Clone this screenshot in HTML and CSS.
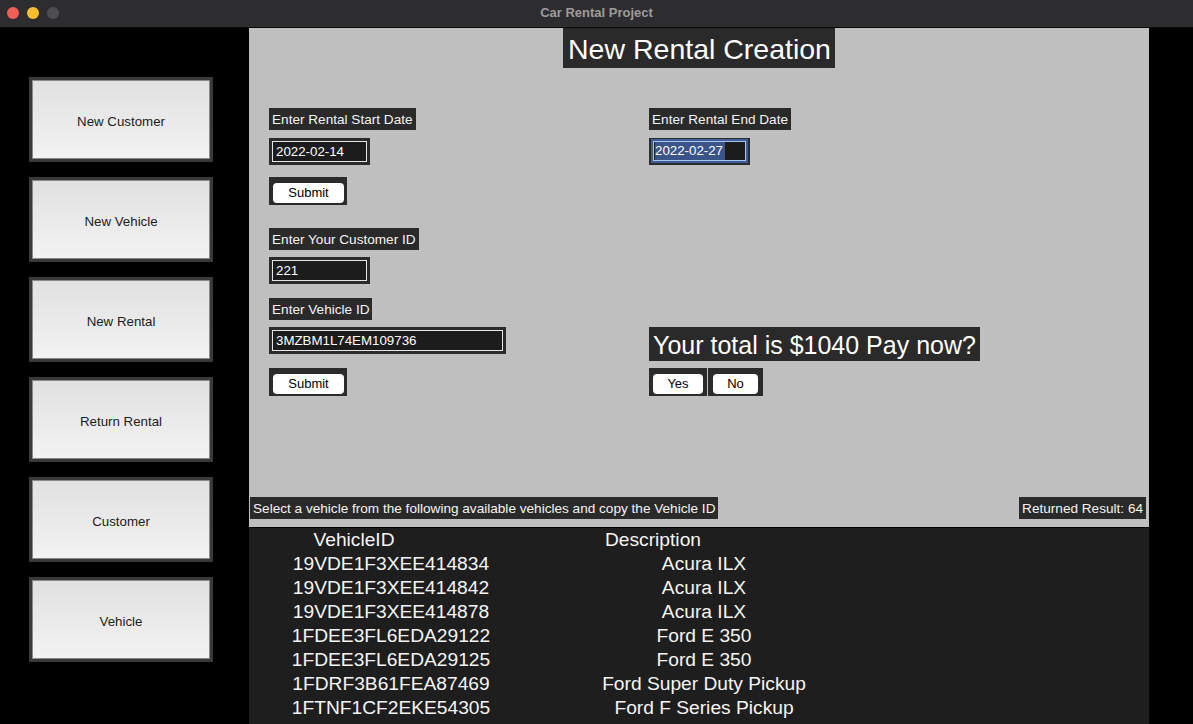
FILE: index.html
```html
<!DOCTYPE html>
<html lang="en">
<head>
<meta charset="utf-8">
<title>Car Rental Project</title>
<link rel="stylesheet" href="styles.css">
</head>
<body>
<div class="window">
  <header class="titlebar">
    <div class="lights">
      <span class="light red"></span>
      <span class="light yellow"></span>
      <span class="light gray"></span>
    </div>
    <div class="wintitle">Car Rental Project</div>
  </header>
  <div class="content">
    <nav class="sidebar">
      <button class="navbtn">New Customer</button>
      <button class="navbtn">New Vehicle</button>
      <button class="navbtn">New Rental</button>
      <button class="navbtn">Return Rental</button>
      <button class="navbtn">Customer</button>
      <button class="navbtn">Vehicle</button>
    </nav>
    <main class="main">
      <section class="panel">
        <h1 class="heading">New Rental Creation</h1>
        <div class="form">
          <div class="label c1 r1">Enter Rental Start Date</div>
          <div class="entry c1 r2"><div class="field">2022-02-14</div></div>
          <div class="btnframe c1 r3"><span class="btn submit">Submit</span></div>
          <div class="label c1 r4">Enter Your Customer ID</div>
          <div class="entry c1 r5"><div class="field">221</div></div>
          <div class="label c1 r6">Enter Vehicle ID</div>
          <div class="entry wide c1 r7"><div class="field">3MZBM1L74EM109736</div></div>
          <div class="btnframe c1 r8"><span class="btn submit">Submit</span></div>

          <div class="label c2 r1">Enter Rental End Date</div>
          <div class="entry focus c2 r2"><div class="ring"><div class="field"><span class="sel">2022-02-27</span></div></div></div>
          <div class="total c2 r7">Your total is $1040 Pay now?</div>
          <div class="choice c2 r8">
            <div class="btnframe yesf"><span class="btn yes">Yes</span></div>
            <div class="btnframe nof"><span class="btn no">No</span></div>
          </div>
        </div>
        <div class="statusbar">
          <div class="label">Select a vehicle from the following available vehicles and copy the Vehicle ID</div>
          <div class="label">Returned Result: 64</div>
        </div>
      </section>
      <section class="results">
        <div class="grid">
          <div class="th th1">VehicleID</div><div class="th th2">Description</div>
          <div class="td">19VDE1F3XEE414834</div><div class="td">Acura ILX</div>
          <div class="td">19VDE1F3XEE414842</div><div class="td">Acura ILX</div>
          <div class="td">19VDE1F3XEE414878</div><div class="td">Acura ILX</div>
          <div class="td">1FDEE3FL6EDA29122</div><div class="td">Ford E 350</div>
          <div class="td">1FDEE3FL6EDA29125</div><div class="td">Ford E 350</div>
          <div class="td">1FDRF3B61FEA87469</div><div class="td">Ford Super Duty Pickup</div>
          <div class="td">1FTNF1CF2EKE54305</div><div class="td">Ford F Series Pickup</div>
        </div>
      </section>
    </main>
  </div>
</div>
</body>
</html>
```
FILE: styles.css
```css
* { box-sizing: border-box; }
html, body { margin: 0; padding: 0; }
body {
  background: #000;
  font-family: "Liberation Sans", Arial, sans-serif;
  width: 1193px;
  height: 724px;
  overflow: hidden;
}
.window { width: 1193px; height: 724px; display: flex; flex-direction: column; }

.titlebar {
  height: 28px;
  flex: none;
  background: #2d2d2f;
  border-bottom: 1px solid #0a0a0a;
  display: flex;
  align-items: center;
  justify-content: center;
  position: relative;
}
.lights { position: absolute; left: 7px; top: 7px; display: flex; gap: 8px; }
.light { width: 12px; height: 12px; border-radius: 50%; display: block; }
.red { background: #ee5f57; }
.yellow { background: #f5be31; }
.gray { background: #4e4e50; }
.wintitle { color: #9c9c9e; font-weight: bold; font-size: 13px; margin-top: -2px; }

.content { flex: 1; display: flex; min-height: 0; }

.sidebar {
  width: 249px;
  flex: none;
  padding: 49px 0 0 29px;
  display: flex;
  flex-direction: column;
  gap: 15px;
}
.navbtn {
  width: 184px;
  height: 85px;
  border: 3px solid #393939;
  box-shadow: inset 0 0 0 1px #8a8a8a;
  background: linear-gradient(#e0e0e0, #f3f3f3);
  font-family: "Liberation Sans", Arial, sans-serif;
  font-size: 13.3px;
  color: #1c1c1c;
  padding: 4px 0 0 0;
  margin: 0;
}

.main { width: 900px; flex: none; display: flex; flex-direction: column; }

.panel {
  flex: none;
  background: #bfbfbf;
  display: flex;
  flex-direction: column;
  border-bottom: 1px solid #000;
  height: 500px;
}
.heading {
  margin: 0 auto;
  height: 40px;
  line-height: 42px;
  background: #2a2a2a;
  color: #fff;
  font-size: 28.5px;
  font-weight: normal;
  padding: 0 4px 0 5px;
}

.form {
  margin-top: 40px;
  padding-left: 20px;
  display: grid;
  grid-template-columns: 380px 1fr;
  grid-template-rows: 30px 39px 51px 29px 41px 29px 41px 28px;
  align-items: start;
  justify-items: start;
}
.c1 { grid-column: 1; }
.c2 { grid-column: 2; }
.r1 { grid-row: 1; } .r2 { grid-row: 2; } .r3 { grid-row: 3; } .r4 { grid-row: 4; }
.r5 { grid-row: 5; } .r6 { grid-row: 6; } .r7 { grid-row: 7; } .r8 { grid-row: 8; }

.label {
  background: #2a2a2a;
  color: #f4f4f4;
  font-size: 13.6px;
  height: 22px;
  line-height: 23px;
  padding: 0 3px;
  white-space: nowrap;
}

.entry {
  width: 101px;
  height: 27px;
  background: #2b2b2b;
  padding: 3px;
}
.entry.wide { width: 237px; }
.field {
  width: 100%;
  height: 21px;
  border: 1px solid #e6e6e6;
  background: #1c1c1c;
  color: #fff;
  font-size: 13.3px;
  line-height: 19px;
  padding-left: 3px;
  white-space: nowrap;
}
.entry.focus { padding: 1px 2px 2px 2px; }
.ring {
  height: 100%;
  border: 2px solid #3f5e98;
}
.focus .field {
  height: 100%;
  border: 1px solid #a9c1ee;
  line-height: 18px;
  padding-left: 1px;
}
.sel { background: #3c5589; display: inline-block; height: 18px; padding-right: 2px; }

.btnframe {
  background: #2b2b2b;
  width: 78px;
  height: 28px;
  padding: 6px 3px 2px 4px;
  display: flex;
}
.btn {
  display: block;
  width: 100%;
  height: 20px;
  background: #fff;
  border-radius: 4px;
  color: #000;
  font-size: 13px;
  line-height: 20px;
  text-align: center;
}

.total {
  background: #2a2a2a;
  color: #fff;
  font-size: 25px;
  height: 34px;
  line-height: 36px;
  padding: 0 4px;
  white-space: nowrap;
}
.choice { display: flex; gap: 1px; }
.btnframe.yesf { width: 58px; padding: 6px 4px 2px 4px; }
.btnframe.nof { width: 55px; padding: 6px 5px 2px 5px; }

.statusbar {
  margin-top: auto;
  padding: 0 3px 8px 1px;
  display: flex;
  justify-content: space-between;
}

.results {
  flex: 1;
  min-height: 0;
  background: #1e1e1e;
  overflow: hidden;
}
.grid {
  display: grid;
  grid-template-columns: 284px 342px;
  color: #f5f5f5;
  font-size: 19.2px;
  line-height: 24px;
  white-space: nowrap;
}
.td, .th { text-align: center; }
.th1 { padding-right: 74px; }
.th2 { padding-right: 102px; }
```
